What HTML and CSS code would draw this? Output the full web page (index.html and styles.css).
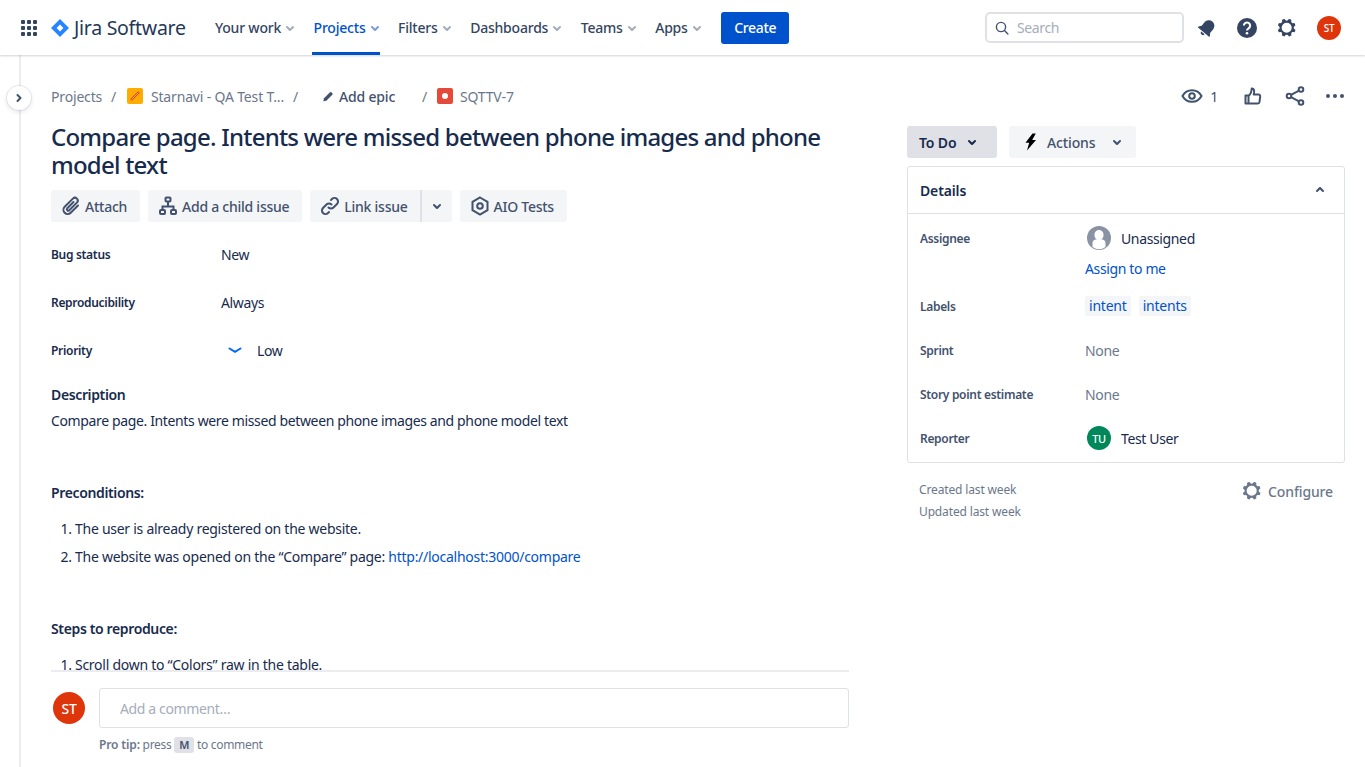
FILE: index.html
```html
<!DOCTYPE html>
<html lang="en">
<head>
    <meta charset="UTF-8">
    <meta name="viewport" content="width=device-width, initial-scale=1.0">
    <title>SQTTV-7 - Jira</title>
    <link rel="stylesheet" href="styles.css">
</head>
<body>
    <svg class="sprite" width="0" height="0">
        <symbol id="chev" viewBox="0 0 24 24"><path d="M8.292 10.293a1.009 1.009 0 0 0 0 1.419l2.939 2.965c.218.215.5.322.779.322s.556-.107.769-.322l2.93-2.955a1.01 1.01 0 0 0 0-1.419.987.987 0 0 0-1.406 0l-2.298 2.317-2.307-2.327a.99.99 0 0 0-1.406 0z" fill="currentColor"/></symbol>
        <symbol id="gear" viewBox="0 0 24 24"><path fill="currentColor" fill-rule="evenodd" d="M11.701 16.7a5.002 5.002 0 1 1 0-10.003 5.002 5.002 0 0 1 0 10.004m8.368-3.117a1.995 1.995 0 0 1-1.346-1.885c0-.876.563-1.613 1.345-1.885a.48.48 0 0 0 .315-.574 8.947 8.947 0 0 0-.836-1.993.477.477 0 0 0-.598-.195 2.04 2.04 0 0 1-1.29.08 1.988 1.988 0 0 1-1.404-1.395 2.04 2.04 0 0 1 .076-1.297.478.478 0 0 0-.196-.597 8.98 8.98 0 0 0-1.975-.826.479.479 0 0 0-.574.314 1.995 1.995 0 0 1-1.885 1.346 1.994 1.994 0 0 1-1.884-1.345.482.482 0 0 0-.575-.315c-.708.2-1.379.485-2.004.842a.47.47 0 0 0-.198.582A2.002 2.002 0 0 1 4.445 7.06a.478.478 0 0 0-.595.196 8.946 8.946 0 0 0-.833 1.994.48.48 0 0 0 .308.572 1.995 1.995 0 0 1 1.323 1.877c0 .867-.552 1.599-1.324 1.877a.479.479 0 0 0-.308.57 8.99 8.99 0 0 0 .723 1.79.477.477 0 0 0 .624.194c.595-.273 1.343-.264 2.104.238.117.077.225.185.302.3.527.8.512 1.58.198 2.188a.473.473 0 0 0 .168.628 8.946 8.946 0 0 0 2.11.897.474.474 0 0 0 .57-.313 1.995 1.995 0 0 1 1.886-1.353c.878 0 1.618.567 1.887 1.353a.475.475 0 0 0 .57.313 8.964 8.964 0 0 0 2.084-.883.473.473 0 0 0 .167-.631c-.318-.608-.337-1.393.191-2.195.077-.116.185-.225.302-.302.772-.511 1.527-.513 2.125-.23a.477.477 0 0 0 .628-.19 8.925 8.925 0 0 0 .728-1.793.478.478 0 0 0-.314-.573"/></symbol>
    </svg>

    <header class="topbar">
        <svg class="grid-icon" width="16" height="16" viewBox="0 0 16 16"><g fill="#344563"><rect x="0" y="0" width="4" height="4" rx="1"/><rect x="6" y="0" width="4" height="4" rx="1"/><rect x="12" y="0" width="4" height="4" rx="1"/><rect x="0" y="6" width="4" height="4" rx="1"/><rect x="6" y="6" width="4" height="4" rx="1"/><rect x="12" y="6" width="4" height="4" rx="1"/><rect x="0" y="12" width="4" height="4" rx="1"/><rect x="6" y="12" width="4" height="4" rx="1"/><rect x="12" y="12" width="4" height="4" rx="1"/></g></svg>
        <a class="brand">
            <svg width="18" height="18" viewBox="0 0 18 18"><path d="M9 0l9 9-9 9-9-9z" fill="#2684ff"/><path d="M9 5.600L12.400 9 9 12.400 5.600 9z" fill="#fff"/></svg>
            <span>Jira Software</span>
        </a>
        <nav class="nav">
            <a class="nav-item">Your work<svg class="nav-chev"><use href="#chev"/></svg></a>
            <a class="nav-item active">Projects<svg class="nav-chev"><use href="#chev"/></svg></a>
            <a class="nav-item">Filters<svg class="nav-chev"><use href="#chev"/></svg></a>
            <a class="nav-item">Dashboards<svg class="nav-chev"><use href="#chev"/></svg></a>
            <a class="nav-item">Teams<svg class="nav-chev"><use href="#chev"/></svg></a>
            <a class="nav-item">Apps<svg class="nav-chev"><use href="#chev"/></svg></a>
        </nav>
        <button class="create">Create</button>
        <div class="search">
            <svg width="14" height="14" viewBox="0 0 14 14" fill="none" stroke="#42526e" stroke-width="1.400"><circle cx="6" cy="6" r="4.600"/><path d="M9.500 9.500l3.400 3.400" stroke-linecap="round"/></svg>
            <span>Search</span>
        </div>
        <div class="top-icons">
            <svg width="24" height="24" viewBox="0 0 24 24"><g transform="rotate(40 12 12)" fill="#344563"><path d="M12 3.600a5.600 5.600 0 0 0-5.600 5.600v4.400L4.600 16.400c-.3.500 0 1 .6 1h13.600c.6 0 .9-.5.6-1l-1.800-2.800V9.200A5.600 5.600 0 0 0 12 3.600z"/><path d="M9.800 18.400h4.400a2.200 2.200 0 0 1-4.400 0z"/></g></svg>
            <svg width="24" height="24" viewBox="0 0 24 24"><circle cx="12" cy="12" r="10" fill="#344563"/><path d="M8.900 9.600a3.100 3.100 0 1 1 4.700 2.700c-1 .6-1.600 1.100-1.600 2.200" fill="none" stroke="#fff" stroke-width="2.100"/><circle cx="12" cy="17.300" r="1.300" fill="#fff"/></svg>
            <svg class="top-gear" width="24" height="24"><use href="#gear"/></svg>
            <span class="avatar small">ST</span>
        </div>
    </header>

    <div class="page">
        <aside class="rail">
            <button class="rail-toggle"><svg width="16" height="16" viewBox="0 0 16 16" fill="none" stroke="#42526e" stroke-width="2" stroke-linecap="round" stroke-linejoin="round"><path d="M6.500 5l3 3-3 3"/></svg></button>
        </aside>
        <main class="issue">
            <div class="issue-top">
                <div class="crumbs">
                    <a>Projects</a><i class="sep first">/</i>
                    <svg class="proj" width="16" height="16" viewBox="0 0 16 16"><rect width="16" height="16" rx="2" fill="#ffab00"/><path d="M4 12l8-8" stroke="#de350b" stroke-width="2"/><path d="M4.500 11.500l7-7" stroke="#ffd7c2" stroke-width=".7"/></svg>
                    <a class="proj-name">Starnavi - QA Test T...</a><i class="sep">/</i>
                    <a class="epic"><svg width="16" height="16" viewBox="0 0 24 24"><path d="M6 15.500L15 6.500a1.500 1.500 0 0 1 2.100 0l1.400 1.400a1.500 1.500 0 0 1 0 2.100L9.500 19 5 20z" fill="#42526e"/></svg>Add epic</a>
                    <i class="sep epic-sep">/</i>
                    <svg class="bug" width="16" height="16" viewBox="0 0 16 16"><rect width="16" height="16" rx="2" fill="#e5493a"/><circle cx="8" cy="8" r="3" fill="#fff"/></svg>
                    <a>SQTTV-7</a>
                </div>
                <div class="issue-actions">
                    <svg width="24" height="24" viewBox="0 0 24 24" fill="none" stroke="#42526e" stroke-width="2"><path d="M2.500 12C4.500 8.300 8 6.200 12 6.200s7.500 2.100 9.500 5.800c-2 3.700-5.500 5.800-9.500 5.800S4.500 15.700 2.500 12z"/><circle cx="12" cy="12" r="2.800"/></svg>
                    <span class="watch-count">1</span>
                    <svg class="like" width="24" height="24" viewBox="0 0 24 24" fill="none" stroke="#42526e" stroke-width="2" stroke-linejoin="round"><path d="M4.500 11.500v8h3v-8zM7.500 12c2-1.500 3-3.500 3.200-7.500 2-.3 2.800 1.300 2.300 4.500l-.3 1.500h5c1 0 1.600.8 1.500 1.800l-.7 5.700c-.1 1-.8 1.500-1.700 1.500H7.500"/></svg>
                    <svg class="share" width="24" height="24" viewBox="0 0 24 24" fill="none" stroke="#42526e" stroke-width="2"><circle cx="6" cy="12" r="2.300"/><circle cx="18" cy="5.500" r="2.300"/><circle cx="18" cy="18.500" r="2.300"/><path d="M8 10.900l8-4.300M8 13.100l8 4.300"/></svg>
                    <svg class="more" width="24" height="24" viewBox="0 0 24 24" fill="#42526e"><circle cx="5" cy="12" r="2"/><circle cx="12" cy="12" r="2"/><circle cx="19" cy="12" r="2"/></svg>
                </div>
            </div>

            <div class="columns">
                <section class="left">
                    <div class="scroller">
                        <h1>Compare page. Intents were missed between phone images and phone model text</h1>
                        <div class="toolbar">
                            <button class="tool">
                                <svg width="24" height="24" viewBox="0 0 24 24" fill="none" stroke="#42526e" stroke-width="2" stroke-linecap="round"><path d="M19 11.500l-7.300 7.300a4.200 4.200 0 0 1-6-6l8.200-8.200a2.800 2.800 0 0 1 4 4l-7.600 7.600a1.400 1.400 0 0 1-2-2l6.200-6.200"/></svg>
                                Attach
                            </button>
                            <button class="tool">
                                <svg width="24" height="24" viewBox="0 0 24 24" fill="none" stroke="#42526e" stroke-width="2"><rect x="9.500" y="3.500" width="5" height="4" rx="1"/><rect x="4" y="16" width="5" height="4" rx="1"/><rect x="15" y="16" width="5" height="4" rx="1"/><path d="M12 7.500v5M6.500 16v-3.500h11V16"/></svg>
                                Add a child issue
                            </button>
                            <div class="split">
                                <button class="tool">
                                    <svg width="24" height="24" viewBox="0 0 24 24" fill="none" stroke="#42526e" stroke-width="2" stroke-linecap="round"><path d="M10.500 13.500a3.500 3.500 0 0 0 5 0l3.500-3.500a3.500 3.500 0 0 0-5-5l-1 1"/><path d="M13.500 10.500a3.500 3.500 0 0 0-5 0L5 14a3.500 3.500 0 0 0 5 5l1-1"/></svg>
                                    Link issue
                                </button>
                                <button class="tool tool-chev"><svg width="24" height="24"><use href="#chev"/></svg></button>
                            </div>
                            <button class="tool">
                                <svg width="24" height="24" viewBox="0 0 24 24" fill="none" stroke="#42526e" stroke-width="2"><path d="M12 3.500l7.500 4.300v8.400L12 20.500l-7.500-4.300V7.800z"/><circle cx="12" cy="12" r="2.800"/></svg>
                                AIO Tests
                            </button>
                        </div>

                        <div class="fields">
                            <div class="field"><b>Bug status</b><span>New</span></div>
                            <div class="field"><b>Reproducibility</b><span>Always</span></div>
                            <div class="field">
                                <b>Priority</b>
                                <span class="priority"><svg width="16" height="16" viewBox="0 0 16 16"><path d="M2.500 6.500L8 9.800l5.500-3.300" fill="none" stroke="#0065ff" stroke-width="2" stroke-linecap="round"/></svg>Low</span>
                            </div>
                        </div>

                        <h2 class="desc-title">Description</h2>
                        <p class="desc-text">Compare page. Intents were missed between phone images and phone model text</p>
                        <h3 class="pre">Preconditions:</h3>
                        <ol>
                            <li>The user is already registered on the website.</li>
                            <li>The website was opened on the “Compare” page: <a class="link">http://localhost:3000/compare</a></li>
                        </ol>
                        <h3 class="steps">Steps to reproduce:</h3>
                        <ol>
                            <li>Scroll down to “Colors” raw in the table.</li>
                        </ol>
                    </div>
                    <div class="comment">
                        <span class="avatar large">ST</span>
                        <div class="comment-main">
                            <div class="comment-box">Add a comment…</div>
                            <p class="tip"><b>Pro tip:</b> press <kbd>M</kbd> to comment</p>
                        </div>
                    </div>
                </section>

                <section class="right">
                    <div class="status-row">
                        <button class="status">To Do<svg width="24" height="24"><use href="#chev"/></svg></button>
                        <button class="actions">
                            <svg width="16" height="18" viewBox="0 0 16 18"><path d="M9.500 .5L2.500 9.800h3.700L4 17.500l9-10.500H9.200l3.600-6.500z" fill="#000"/></svg>
                            <span>Actions</span>
                            <svg class="act-chev" width="24" height="24"><use href="#chev"/></svg>
                        </button>
                    </div>
                    <div class="details">
                        <div class="details-head"><span>Details</span><svg class="flip" width="24" height="24"><use href="#chev"/></svg></div>
                        <div class="details-body">
                            <div class="row row-assignee">
                                <b>Assignee</b>
                                <div>
                                    <div class="person">
                                        <svg width="24" height="24" viewBox="0 0 24 24"><circle cx="12" cy="12" r="12" fill="#8993a4"/><path d="M12 4a4.500 4.500 0 0 1 4.500 4.500v1a4.500 4.500 0 0 1-9 0v-1A4.500 4.500 0 0 1 12 4zM5.500 17c0-2 1.500-3.500 3.500-3.500h6c2 0 3.500 1.500 3.500 3.500v4a11.500 11.500 0 0 1-13 0z" fill="#fff"/></svg>
                                        <span>Unassigned</span>
                                    </div>
                                    <a class="link assign">Assign to me</a>
                                </div>
                            </div>
                            <div class="row row-labels">
                                <b>Labels</b>
                                <div class="labels"><a class="label">intent</a><a class="label">intents</a></div>
                            </div>
                            <div class="row"><b>Sprint</b><span class="none">None</span></div>
                            <div class="row"><b>Story point estimate</b><span class="none">None</span></div>
                            <div class="row">
                                <b>Reporter</b>
                                <div class="person"><span class="avatar green">TU</span><span>Test User</span></div>
                            </div>
                        </div>
                    </div>
                    <div class="meta">
                        <div class="dates"><p>Created last week</p><p>Updated last week</p></div>
                        <a class="configure"><svg width="24" height="24"><use href="#gear"/></svg>Configure</a>
                    </div>
                </section>
            </div>
        </main>
    </div>
</body>
</html>
```

FILE: styles.css
```css
* {
    margin: 0;
    padding: 0;
    box-sizing: border-box;
    letter-spacing: -0.026em;
}

html, body {
    height: 100%;
    overflow: hidden;
}

body {
    font-family: "Noto Sans", sans-serif;
    font-size: 14px;
    color: #172b4d;
    background: #fff;
    display: flex;
    flex-direction: column;
}

.sprite {
    position: absolute;
}

button {
    font-family: inherit;
    border: none;
}

/* top bar */
.topbar {
    height: 55px;
    flex: none;
    display: flex;
    align-items: center;
    padding-left: 21px;
    background: #fff;
    box-shadow: 0 1px 2px rgba(9, 30, 66, 0.2);
    position: relative;
    z-index: 2;
}

.brand {
    display: flex;
    align-items: center;
    gap: 5px;
    margin-left: 14px;
    width: 162px;
    font-size: 19.5px;
    color: #253858;
}

.brand span {
    letter-spacing: -0.014em;
}

.nav {
    display: flex;
    height: 100%;
}

.nav-item {
    display: flex;
    align-items: center;
    height: 100%;
    padding: 3px 2px 0;
    margin-right: 16.5px;
    color: #344563;
    font-weight: 500;
    letter-spacing: -0.015em;
    border-bottom: 3px solid transparent;
}

.nav-item.active {
    color: #0052cc;
    border-bottom-color: #0052cc;
}

.nav-chev {
    width: 24px;
    height: 24px;
    margin: 0 -9px 0 -3px;
    color: #a5adba;
}

.nav-item.active .nav-chev {
    color: #7a9fd8;
}

.create {
    width: 68px;
    height: 32px;
    margin-left: 3px;
    background: #0052cc;
    color: #fff;
    font-size: 14px;
    font-weight: 500;
    border-radius: 3px;
}

.search {
    width: 199px;
    height: 31px;
    margin-left: auto;
    display: flex;
    align-items: center;
    gap: 8px;
    padding-left: 8px;
    border: 2px solid #dfe1e6;
    border-radius: 5px;
    color: #a5adba;
}

.top-icons {
    display: flex;
    align-items: center;
    gap: 16px;
    margin-left: 11px;
    padding-right: 24px;
}

.top-gear {
    color: #344563;
    margin-right: 2px;
}

.avatar {
    display: flex;
    align-items: center;
    justify-content: center;
    border-radius: 50%;
    background: #de350b;
    color: #fff;
    font-weight: 500;
    flex: none;
}

.avatar.small {
    width: 24px;
    height: 24px;
    font-size: 10px;
}

.avatar.large {
    width: 32px;
    height: 32px;
    margin-top: 4px;
    font-size: 14px;
}

.avatar.green {
    width: 24px;
    height: 24px;
    font-size: 11px;
    background: #00875a;
}

/* layout */
.page {
    flex: 1;
    min-height: 0;
    display: flex;
}

.rail {
    width: 21px;
    flex: none;
    border-right: 2px solid #ebecf0;
    position: relative;
}

.rail-toggle {
    position: absolute;
    left: 7px;
    top: 31px;
    width: 24px;
    height: 24px;
    display: flex;
    align-items: center;
    justify-content: center;
    border-radius: 50%;
    background: #fff;
    box-shadow: 0 0 0 1px rgba(9, 30, 66, 0.08), 0 2px 4px 1px rgba(9, 30, 66, 0.08);
}

.issue {
    flex: 1;
    min-width: 0;
    display: flex;
    flex-direction: column;
    padding: 0 20px 0 30px;
}

.issue-top {
    height: 68px;
    flex: none;
    display: flex;
    align-items: center;
    justify-content: space-between;
    padding-top: 14px;
}

.crumbs {
    display: flex;
    align-items: center;
    color: #6b778c;
}

.crumbs a {
    letter-spacing: -0.012em;
}

.sep {
    font-style: normal;
    margin: 0 7px 0 9px;
    color: #6b778c;
}

.proj {
    margin-left: 4px;
    margin-right: 8px;
}

.epic {
    display: flex;
    align-items: center;
    gap: 3px;
    margin-left: 15px;
    font-weight: 500;
    color: #42526e;
}

.epic-sep {
    margin-left: 27px;
    margin-right: 10px;
}

.bug {
    margin-right: 7px;
}

.issue-actions {
    display: flex;
    align-items: center;
    margin-right: -2px;
}

.watch-count {
    margin-left: 6px;
    color: #42526e;
}

.like {
    margin-left: 23px;
}

.share {
    margin-left: 18px;
}

.more {
    margin-left: 16px;
}

.columns {
    flex: 1;
    min-height: 0;
    display: flex;
    justify-content: space-between;
}

/* left column */
.left {
    width: 798px;
    display: flex;
    flex-direction: column;
}

.scroller {
    flex: 1;
    min-height: 0;
    overflow: hidden;
    border-bottom: 2px solid #ebecf0;
}

h1 {
    font-size: 24px;
    font-weight: 500;
    line-height: 28px;
    letter-spacing: -0.032em;
}

.toolbar {
    display: flex;
    gap: 8px;
    margin-top: 11px;
}

.tool {
    height: 32px;
    display: flex;
    align-items: center;
    gap: 2px;
    padding: 0 13px 0 8px;
    background: #f4f5f7;
    color: #42526e;
    font-size: 14px;
    font-weight: 500;
    letter-spacing: -0.018em;
    border-radius: 3px;
}

.split {
    display: flex;
}

.split .tool:first-child {
    padding-right: 12px;
    border-radius: 3px 0 0 3px;
}

.tool-chev {
    width: 32px;
    padding: 0;
    justify-content: center;
    border-radius: 0 3px 3px 0;
    border-left: 2px solid #dfe1e6;
}

.fields {
    margin-top: 8px;
}

.field {
    height: 48px;
    display: flex;
    align-items: center;
}

.field b {
    width: 170px;
    font-size: 12px;
    font-weight: 600;
}

.priority {
    display: flex;
    align-items: center;
    gap: 14px;
    margin-left: 6px;
}

.desc-title {
    font-size: 14px;
    font-weight: 600;
    line-height: 20px;
    margin-top: 11px;
}

.desc-text {
    line-height: 20px;
    margin-top: 6px;
}

h3 {
    font-size: 14px;
    font-weight: 600;
    line-height: 20px;
}

.pre {
    margin-top: 52px;
}

.steps {
    margin-top: 52px;
}

ol {
    margin-top: 16px;
    padding-left: 24px;
}

li, li a {
    line-height: 20px;
    letter-spacing: -0.019em;
}

li {
    margin-bottom: 8px;
}

.link {
    color: #0052cc;
}

.comment {
    height: 95px;
    flex: none;
    display: flex;
    gap: 14px;
    padding: 16px 0 0 2px;
}

.comment-main {
    flex: 1;
}

.comment-box {
    height: 40px;
    display: flex;
    align-items: center;
    padding-left: 20px;
    border: 1px solid #dfe1e6;
    border-radius: 3px;
    color: #a5adba;
}

.tip {
    margin-top: 8px;
    font-size: 12px;
    line-height: 18px;
    color: #6b778c;
}

.tip b {
    font-weight: 600;
    letter-spacing: -0.012em;
}

kbd {
    display: inline-block;
    font-family: inherit;
    font-weight: 600;
    font-size: 11px;
    line-height: 16px;
    color: #42526e;
    background: #dfe1e6;
    padding: 0 5px;
    border-radius: 3px;
}

/* right column */
.right {
    width: 438px;
    flex: none;
}

.status-row {
    display: flex;
    gap: 12px;
    margin-top: 3px;
}

.status {
    width: 90px;
    height: 32px;
    display: flex;
    align-items: center;
    gap: 4px;
    padding-left: 12px;
    background: #dfe1e6;
    color: #172b4d;
    font-size: 14px;
    font-weight: 600;
    letter-spacing: -0.01em;
    border-radius: 3px;
}

.actions {
    width: 127px;
    height: 32px;
    display: flex;
    align-items: center;
    padding-left: 14px;
    gap: 8px;
    background: #f4f5f7;
    color: #42526e;
    font-size: 14px;
    font-weight: 500;
    border-radius: 3px;
}

.actions span {
    letter-spacing: -0.01em;
}

.act-chev {
    margin-left: 2px;
}

.details {
    margin-top: 8px;
    border: 1px solid #dfe1e6;
    border-radius: 3px;
}

.details-head {
    height: 47px;
    display: flex;
    align-items: center;
    justify-content: space-between;
    padding: 0 12px;
    font-weight: 600;
    border-bottom: 1px solid #dfe1e6;
}

.details-head span {
    letter-spacing: -0.01em;
}

.flip {
    color: #42526e;
    transform: rotate(180deg);
}

.details-body {
    padding: 12px 12px 2px;
}

.row {
    display: flex;
    align-items: center;
    height: 44px;
}

.row b {
    width: 165px;
    flex: none;
    font-size: 12px;
    font-weight: 600;
    color: #42526e;
}

.row-assignee {
    height: auto;
    align-items: flex-start;
    padding-bottom: 10px;
}

.row-assignee b {
    line-height: 26px;
}

.row-labels {
    height: 39px;
    padding-bottom: 5px;
}

.person {
    display: flex;
    align-items: center;
    gap: 10px;
    padding-left: 2px;
}

.assign {
    display: block;
    line-height: 20px;
    margin-top: 9px;
}

.labels {
    display: flex;
    gap: 8px;
}

.label {
    padding: 0 4px;
    height: 20px;
    line-height: 20px;
    border-radius: 3px;
    background: #f4f5f7;
    color: #0052cc;
    letter-spacing: -0.015em;
}

.none {
    color: #6b778c;
}

.meta {
    display: flex;
    justify-content: space-between;
    padding: 16px 12px 0;
}

.dates p {
    font-size: 12px;
    line-height: 22px;
    color: #6b778c;
    letter-spacing: -0.012em;
}

.configure {
    display: flex;
    align-items: center;
    gap: 4px;
    height: 24px;
    color: #6b778c;
    font-weight: 500;
    letter-spacing: -0.01em;
}
```
